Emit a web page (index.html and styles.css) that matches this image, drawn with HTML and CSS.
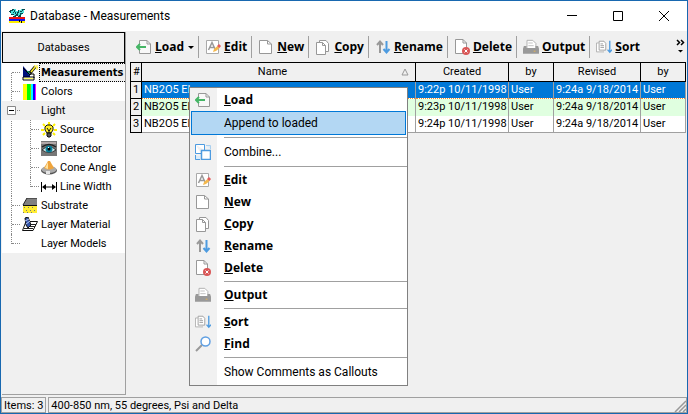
FILE: index.html
```html
<!DOCTYPE html>
<html lang="en">
<head>
<meta charset="utf-8">
<title>Database - Measurements</title>
<link rel="stylesheet" href="styles.css">
</head>
<body>
<svg class="defs" aria-hidden="true">
  <symbol id="load" viewBox="0 0 16 16"><path d="M3.500 5V1.500H11L14.500 5V14.500H3.500V11" fill="#f8f8f8" stroke="#989898"/><path d="M11 1.500V5H14.500" fill="none" stroke="#989898"/><path d="M1 8H10M4 5L1 8L4 11" fill="none" stroke="#45b565" stroke-width="2"/></symbol>
  <symbol id="edit" viewBox="0 0 16 16"><path d="M1.500 1.500H13.500V14.500H1.500Z" fill="#fff" stroke="#aaa"/><path d="M3.500 11L7 3.500L10.500 11M5 8.500H9" fill="none" stroke="#999" stroke-width="1.500"/><path d="M8 13L9 10L12.500 7L14.500 9L11 12Z" fill="#f4b84c"/><path d="M12 7L14 5L16 7L14.500 9Z" fill="#e55b5b"/></symbol>
  <symbol id="new" viewBox="0 0 16 16"><path d="M1.500 1.500H9.500L13.500 5V14.500H1.500Z" fill="#fff" stroke="#989898"/><path d="M9.500 1.500V5H13.500" fill="none" stroke="#989898"/></symbol>
  <symbol id="copy" viewBox="0 0 16 16"><path d="M4.500 3V1.500H11L13.500 4.500V12.500H11" fill="#fff" stroke="#989898"/><path d="M1.500 3.500H7.500L10.500 6.500V15.500H1.500Z" fill="#fff" stroke="#989898"/><path d="M7.500 3.500V6.500H10.500" fill="none" stroke="#989898"/></symbol>
  <symbol id="rename" viewBox="0 0 16 16"><path d="M5 14V3M2 6L5 2.500L8 6" fill="none" stroke="#999" stroke-width="2"/><path d="M11.500 2V13M8.500 10L11.500 13.500L14.500 10" fill="none" stroke="#4d9be0" stroke-width="2"/></symbol>
  <symbol id="delete" viewBox="0 0 16 16"><path d="M1.500 .500H9L12.500 4V14.500H1.500Z" fill="#fff" stroke="#989898"/><path d="M9 .500V4H12.500" fill="none" stroke="#989898"/><circle cx="12" cy="12" r="4" fill="#d95757"/><path d="M10.500 10.500L13.500 13.500M13.500 10.500L10.500 13.500" stroke="#fff"/></symbol>
  <symbol id="output" viewBox="0 0 18 16"><path d="M4.500 9V.500H11L14.500 4V9" fill="#fff" stroke="#aaa"/><path d="M6 3.500H11M6 6.500H12" stroke="#bbb"/><path d="M1 7H4V9H14V7H17L18 10V15.500H0V10Z" fill="#999"/><path d="M12 12H14V13.500H12Z" fill="#d5ad65"/></symbol>
  <symbol id="sort" viewBox="0 0 18 16"><path d="M3 3.500H.500V13.500H9" fill="#fff" stroke="#aaa"/><path d="M3.500 1.500H9L11 4V11.500H3.500Z" fill="#fff" stroke="#999"/><path d="M5 4.500H8M5 6.500H9M5 8.500H9" stroke="#999"/><path d="M15.500 1V14M13 11L15.500 14L18 11" fill="none" stroke="#4d9be0" stroke-width="1.500"/></symbol>
  <symbol id="combine" viewBox="0 0 16 16"><path d="M.500 .500H9.500V6M6 9.500H.500V.500" fill="#fff" stroke="#4d9be0"/><path d="M11 1.500H15.500V5M5 15.500H.500V11" fill="#dcecf9" stroke="#a9cfee"/><path d="M1 12H5V15H1Z" fill="#dcecf9"/><path d="M.500 11V15.500H5" fill="none" stroke="#4d9be0"/><path d="M6.500 6.500H15.500V15.500H6.500Z" fill="#fff" stroke="#4d9be0" stroke-width="1.500"/></symbol>
  <symbol id="find" viewBox="0 0 16 16"><path d="M7 9L1 15" stroke="#999" stroke-width="2"/><circle cx="10.500" cy="5.500" r="4.500" fill="#fff" stroke="#5f9fe2" stroke-width="1.500"/></symbol>
</svg>
<div class="window">
  <header class="titlebar">
    <svg class="app-icon" viewBox="0 0 16 16" shape-rendering="crispEdges"><path d="M1 2H4V1H7V3H9V2H12V1H15V5H13V7H11V8H5V6H2V5H1Z" fill="#4de0dc"/><path d="M0 3H1V2H3V1H5V2H4V3H2V5H1V4H0ZM5 2H6V4H7V6H8V4H9V2H10V5H9V8H7V6H6V4H5ZM11 3H13V4H11ZM13 1H16V2H14V3H13ZM2 6H5V7H2ZM4 4H5V5H4ZM11 5H14V6H12V7H11ZM4 8H6V7H7V9H4ZM10 7H12V9H9V8H10Z" fill="#0a4a50"/><path d="M0 9H16V11H0Z" fill="#e11"/><path d="M0 11H16V13H0Z" fill="#11e"/><path d="M0 13H16V15H0Z" fill="#fe0"/><path d="M10 12H11V14H10ZM12 13H13V15H12Z" fill="#000"/></svg>
    <h1>Database - Measurements</h1>
    <div class="window-buttons">
      <button aria-label="Minimize"><svg viewBox="0 0 12 12"><path d="M1 5.500H11" stroke="#000"/></svg></button>
      <button aria-label="Maximize"><svg viewBox="0 0 12 12"><path d="M1.500 1.500H10.500V10.500H1.500Z" fill="none" stroke="#000"/></svg></button>
      <button aria-label="Close"><svg viewBox="0 0 12 12"><path d="M1 1L11 11M11 1L1 11" stroke="#000"/></svg></button>
    </div>
  </header>
  <div class="workspace">
    <nav class="sidebar" aria-label="Databases">
      <button class="databases">Databases</button>
      <ul class="tree">
        <li class="first"><a href="#" class="node current"><svg viewBox="0 0 16 16"><path d="M1 1L8 9V12H1Z" fill="#00117c"/><path d="M4 6L7 10L8 6Z" fill="#0a8b6a"/><path d="M1 3L8 10L12 4M8 9H12V13M1 12V15H12V12Z" fill="none" stroke="#000"/><path d="M2 13.500H11" stroke="#ff6"/><path d="M8 8L13 2" stroke="#111" stroke-width="3"/><path d="M9 7L13 2" stroke="#fe2" stroke-width="1.500"/><path d="M12 0L16 3M15 0V5" stroke="#fe2"/></svg><span>Measurements</span></a></li>
        <li><a href="#" class="node"><svg viewBox="0 0 16 16" shape-rendering="crispEdges"><path d="M1 0H5V16H1Z" fill="#ff0"/><path d="M5 0H8V16H5Z" fill="#0f0"/><path d="M8 0H9V16H8Z" fill="#7d0"/><path d="M9 0H11V16H9Z" fill="#0ff"/><path d="M11 0H13V16H11Z" fill="#00f"/><path d="M13 0H14V16H13Z" fill="#f0f"/></svg><span>Colors</span></a></li>
        <li class="expanded"><a href="#" class="node"><svg class="toggle" viewBox="0 0 9 9"><path d="M.500 .500H8.500V8.500H.500Z" fill="#fff" stroke="#888"/><path d="M2 4.500H7" stroke="#000"/></svg><i class="blank"></i><span>Light</span></a>
          <ul>
            <li><a href="#" class="node"><svg viewBox="0 0 16 16"><path d="M8 0V3M2 2L4 4M14 2L12 4M0 8H3M13 8H16M2 13L4 11M14 13L12 11" stroke="#fff000" stroke-width="2"/><path d="M6 11L4 8V5L6 3H10L12 5V8L10 11Z" fill="#ffef20" stroke="#111"/><path d="M6 6L8 9L10 6M8 8V13" fill="none" stroke="#111"/><path d="M6 11H10V14L9 15H7L6 14Z" fill="#555" stroke="#111"/></svg><span>Source</span></a></li>
            <li><a href="#" class="node"><svg viewBox="0 0 16 16"><path d="M0 0H16V15H0Z" fill="#777"/><path d="M0 1H15V3H0Z" fill="#b3a9a9"/><path d="M1 9Q8 2 15 9Q8 14 1 9" fill="#d0e8e8" stroke="#333"/><circle cx="8" cy="8" r="3.500" fill="#087f99"/><circle cx="8" cy="8" r="1.500" fill="#000"/><path d="M7 6H8V7H7Z" fill="#fff"/><path d="M1 6Q8 1 15 6" fill="none" stroke="#222" stroke-width="1.500"/></svg><span>Detector</span></a></li>
            <li><a href="#" class="node"><svg viewBox="0 0 16 16"><ellipse cx="8" cy="10.500" rx="8" ry="4" fill="#555"/><ellipse cx="8" cy="9.500" rx="7.500" ry="3.500" fill="#aaa"/><path d="M3 8L7 1H9L13 8Q8 11 3 8" fill="#efa43c"/><path d="M4 8L7 2L7 9Z" fill="#ffe3a0"/><path d="M5 11H9V14H5Z" fill="#e5e5e5"/></svg><span>Cone Angle</span></a></li>
            <li class="last"><a href="#" class="node"><svg viewBox="0 0 16 16"><path d="M.500 3V13M15.500 3V13M2 8H14" stroke="#000"/><path d="M1 8L5 5V11ZM15 8L11 5V11Z"/></svg><span>Line Width</span></a></li>
          </ul>
        </li>
        <li><a href="#" class="node"><svg viewBox="0 0 16 16"><path d="M1 7L5 0H15V7Z" fill="#808080"/><path d="M1 7L5 0H15" fill="none" stroke="#222"/><path d="M1 7H15V15H1Z" fill="#ffed32"/><path d="M1 7.500H15" stroke="#111"/><path d="M2 9.500H14M4 12.500H14M1 14.500H12" stroke="#777" stroke-dasharray="1 3"/></svg><span>Substrate</span></a></li>
        <li><a href="#" class="node"><svg viewBox="0 0 16 16"><path d="M4 4.500H15.500L11 13.500H.500Z" fill="#fff" stroke="#111"/><path d="M8 7.500H14M8 9.500H13M2 11.500H11" stroke="#222"/><path d="M3 1L6 0L9 8L6 11L4 8Z" fill="#35a" stroke="#111"/><path d="M3 4L7 2M4 7L8 4" stroke="#bcf"/></svg><span>Layer Material</span></a></li>
        <li class="last"><a href="#" class="node"><i class="blank"></i><span>Layer Models</span></a></li>
      </ul>
    </nav>
    <main>
      <div class="toolbar" role="toolbar">
        <button><svg><use href="#load"/></svg><b><u>L</u>oad</b><i class="arrow"></i></button>
        <button><svg><use href="#edit"/></svg><b><u>E</u>dit</b></button>
        <button><svg><use href="#new"/></svg><b><u>N</u>ew</b></button>
        <button><svg><use href="#copy"/></svg><b><u>C</u>opy</b></button>
        <button><svg><use href="#rename"/></svg><b><u>R</u>ename</b></button>
        <button><svg><use href="#delete"/></svg><b><u>D</u>elete</b></button>
        <button><svg><use href="#output"/></svg><b><u>O</u>utput</b></button>
        <button><svg><use href="#sort"/></svg><b><u>S</u>ort</b></button>
        <button class="more" aria-label="More commands"><svg viewBox="0 0 10 16"><path d="M1 1L3.500 3.500L1 6M5 1L7.500 3.500L5 6" fill="none" stroke="#000" stroke-width="1.500"/><path d="M2 11H7L4.500 13.500Z"/></svg></button>
      </div>
      <table>
        <colgroup><col class="c-num"><col><col class="c-created"><col class="c-by"><col class="c-revised"><col class="c-by"></colgroup>
        <thead><tr><th>#</th><th><div class="sortable">Name<svg viewBox="0 0 8 8"><path d="M4 1L7 7H1Z" fill="none" stroke="#999"/></svg></div></th><th>Created</th><th>by</th><th>Revised</th><th>by</th></tr></thead>
        <tbody>
          <tr class="selected"><th>1</th><td>NB2O5 EL</td><td>9:22p 10/11/1998</td><td>User</td><td>9:24a 9/18/2014</td><td>User</td></tr>
          <tr class="even"><th>2</th><td>NB2O5 EL</td><td>9:23p 10/11/1998</td><td>User</td><td>9:24a 9/18/2014</td><td>User</td></tr>
          <tr><th>3</th><td>NB2O5 EL</td><td>9:24p 10/11/1998</td><td>User</td><td>9:24a 9/18/2014</td><td>User</td></tr>
        </tbody>
      </table>
    </main>
  </div>
  <footer class="statusbar">
    <span>Items: 3</span>
    <span class="detail">400-850 nm, 55 degrees, Psi and Delta</span>
    <svg class="grip" viewBox="0 0 12 12"><path d="M1 12L12 1M5 12L12 5M9 12L12 9" stroke="#999" stroke-width="1.500"/></svg>
  </footer>
  <div class="menu" role="menu">
    <button role="menuitem"><svg><use href="#load"/></svg><b><u>L</u>oad</b></button>
    <button role="menuitem" class="tall active"><i class="blank"></i><span>Append to loaded</span></button>
    <hr>
    <button role="menuitem" class="tall"><svg><use href="#combine"/></svg><span>Combine...</span></button>
    <hr>
    <button role="menuitem"><svg><use href="#edit"/></svg><b><u>E</u>dit</b></button>
    <button role="menuitem"><svg><use href="#new"/></svg><b><u>N</u>ew</b></button>
    <button role="menuitem"><svg><use href="#copy"/></svg><b><u>C</u>opy</b></button>
    <button role="menuitem"><svg><use href="#rename"/></svg><b><u>R</u>ename</b></button>
    <button role="menuitem"><svg><use href="#delete"/></svg><b><u>D</u>elete</b></button>
    <hr>
    <button role="menuitem"><svg><use href="#output"/></svg><b><u>O</u>utput</b></button>
    <hr>
    <button role="menuitem"><svg><use href="#sort"/></svg><b><u>S</u>ort</b></button>
    <button role="menuitem"><svg><use href="#find"/></svg><b><u>F</u>ind</b></button>
    <hr>
    <button role="menuitem" class="tall"><i class="blank"></i><span>Show Comments as Callouts</span></button>
  </div>
</div>
</body>
</html>
```
FILE: styles.css
```css
* { box-sizing: border-box; }
body { margin: 0; font: 11px/16px Roboto, "Noto Sans", sans-serif; color: #000; }
button { font: inherit; color: inherit; background: none; border: 0; padding: 0; margin: 0; }
ul { list-style: none; margin: 0; padding: 0; }
a { color: inherit; text-decoration: none; }
.defs { position: absolute; width: 0; height: 0; }

.window { position: relative; display: flex; flex-direction: column; min-height: 100vh; background: #f0f0f0; border: 1px solid #1868b0; }

.titlebar { display: flex; align-items: center; height: 30px; padding-left: 8px; background: #fff; }
.app-icon { width: 16px; height: 16px; margin-right: 5px; }
.titlebar h1 { flex: 1; margin: 0; font-size: 12px; font-weight: normal; }
.window-buttons { display: flex; }
.window-buttons button { display: grid; place-items: center; width: 46px; height: 30px; }
.window-buttons svg { width: 12px; height: 12px; }

.workspace { display: flex; flex: 1; padding: 1px 1px 2px; }
.sidebar { width: 124px; border: 1px solid #a0a0a0; border-width: 0 1px 1px 0; }
.databases { display: block; width: 100%; height: 31px; border: 1px solid #000; }
.tree { background: #fff; overflow: hidden; }
.tree li { position: relative; }
.tree li::before { content: ""; position: absolute; left: 9px; top: 0; bottom: 0; border-left: 1px dotted #888; }
.tree .first::before { top: 10px; }
.tree .last::before { bottom: auto; height: 10px; }
.tree .node::before { content: ""; width: 8px; margin: 0 2px 0 10px; border-top: 1px dotted #888; flex: none; }
.node { display: flex; align-items: center; height: 19px; white-space: nowrap; }
.node svg, .node .blank { width: 16px; height: 16px; flex: none; }
.node span { margin-left: 1px; padding-left: 2px; }
.tree ul li { padding-left: 19px; }
.tree ul li::before { left: 28px; }
.node.current { font-family: "DejaVu Sans Condensed", sans-serif; font-weight: bold; }
.node.current span { flex: 1; height: 19px; line-height: 18px; background: #f0f0f0; border: 1px dotted #000; border-right: 0; padding-left: 1px; }
.expanded > .node { position: relative; background: #f0f0f0; }
.node .toggle { position: absolute; left: 5px; top: 5px; width: 9px; height: 9px; }

main { flex: 1; min-width: 0; padding-left: 4px; }
.toolbar { display: flex; align-items: center; height: 30px; font: 12px/16px "Open Sans", sans-serif; }
.toolbar button { display: flex; align-items: center; gap: 3px; height: 22px; padding: 0 4px 0 6px; border-right: 1px solid #a0a0a0; }
.toolbar svg { width: 16px; height: 16px; }
.arrow { margin-left: 1px; border: 3px solid transparent; border-top-color: #000; border-bottom: 0; }
.toolbar button:nth-last-child(2) { border: 0; }
.toolbar .more { margin-left: auto; padding: 0; border: 0; }
.more svg { width: 10px; }

table { width: 100%; table-layout: fixed; border-collapse: collapse; border: 1px solid #a0a0a0; background: #fff; }
th, td { height: 17px; padding: 0 2px; line-height: 16px; font-weight: normal; white-space: nowrap; overflow: hidden; text-align: left; border: 1px solid #a0a0a0; border-width: 0 1px; }
thead th { height: 19px; text-align: center; background: #f0f0f0; border: 1px solid #000; }
tbody th { background: #f0f0f0; border: 1px solid #000; text-align: center; padding: 0; }
.c-num { width: 11px; }
.c-created { width: 93px; }
.c-by { width: 45px; }
.c-revised { width: 87px; }
.sortable { display: flex; align-items: center; justify-content: center; }
.sortable::before { content: ""; margin-right: auto; }
.sortable svg { width: 8px; height: 8px; margin: 0 4px 0 auto; }
.even td { background: #e0ffe0; }
.selected td { color: #fff; background: #0078d7; border-top: 1px dotted #ff8c28; border-bottom: 1px dotted #ff8c28; }

.statusbar { display: flex; gap: 2px; height: 16px; }
.statusbar span { height: 16px; line-height: 15px; padding: 0 2px; border: 1px solid #a0a0a0; }
.statusbar .detail { flex: 1; }
.grip { position: absolute; right: 1px; bottom: 1px; width: 12px; height: 12px; }

.menu { position: absolute; left: 188px; top: 86px; width: 219px; padding: 1px 0; border: 1px solid #808080; background: linear-gradient(to right, #f1f1f1 27px, #fff 27px); font: 12px/16px "Open Sans", sans-serif; }
.menu button { display: flex; align-items: center; gap: 13px; width: 100%; height: 22px; padding-left: 5px; text-align: left; }
.menu .tall { height: 24px; font-family: Roboto, sans-serif; }
.menu svg, .menu .blank { width: 16px; height: 16px; }
.menu .active { width: calc(100% - 2px); margin: 0 1px; padding-left: 3px; background: #b3d7f3; border: 1px solid #0078d7; }
.menu hr { height: 1px; margin: 2px 0 2px 34px; border: 0; background: #a0a0a0; }
```
